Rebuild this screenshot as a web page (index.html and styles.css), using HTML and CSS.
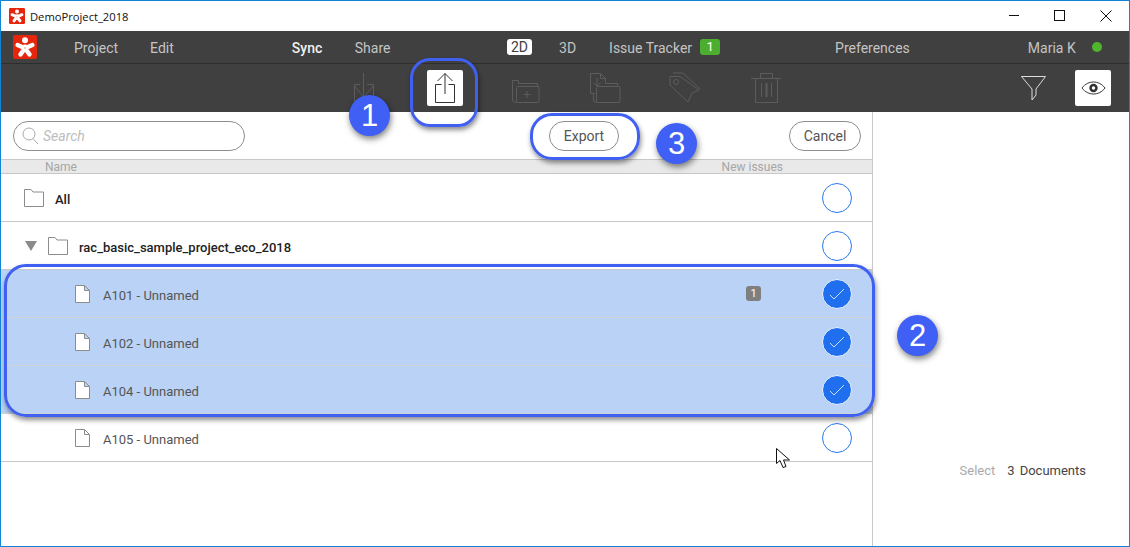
FILE: index.html
```html
<!DOCTYPE html>
<html lang="en">

<head>
  <meta charset="UTF-8">
  <title>DemoProject_2018</title>
  <link rel="stylesheet" href="styles.css">
</head>

<body>
<div class="window">

  <div class="titlebar">
    <svg class="title-logo" viewBox="0 0 24 24"><use href="#logo"/></svg>
    <span class="title-text">DemoProject_2018</span>
    <div class="win-btns">
      <svg width="12" height="12" viewBox="0 0 12 12"><path d="M1 5.500H11" stroke="#111" fill="none"/></svg>
      <svg width="12" height="12" viewBox="0 0 12 12"><rect x=".5" y=".5" width="10" height="10" stroke="#111" fill="none"/></svg>
      <svg width="12" height="12" viewBox="0 0 12 12"><path d="M.5 .5L11.500 11.500M11.500 .5L.5 11.500" stroke="#111" fill="none"/></svg>
    </div>
  </div>

  <div class="menubar">
    <svg class="menu-logo" viewBox="0 0 24 24">
      <g id="logo">
        <rect width="24" height="24" rx="2" fill="#e5260c"/>
        <circle cx="12" cy="5.200" r="3" fill="#fff"/>
        <path d="M4.600 10L12 13.200L19.400 10M12 13.200L7.500 19.400M12 13.200L16.500 19.400" stroke="#fff" stroke-width="4.400" stroke-linecap="round" stroke-linejoin="round" fill="none"/>
        <circle cx="12" cy="13" r="3.600" fill="#fff"/>
        <circle cx="12" cy="13" r="1" fill="#f6b7ab"/>
      </g>
    </svg>
    <a class="menu-item item-project">Project</a>
    <a class="menu-item item-edit">Edit</a>
    <a class="menu-item item-sync">Sync</a>
    <a class="menu-item item-share">Share</a>
    <a class="menu-item item-2d">2D</a>
    <a class="menu-item item-3d">3D</a>
    <a class="menu-item item-issue">Issue Tracker</a>
    <span class="issue-badge">1</span>
    <a class="menu-item item-pref">Preferences</a>
    <a class="menu-item item-user">Maria K</a>
    <span class="status-dot"></span>
  </div>

  <div class="toolbar">
    <svg class="tool tool-import" width="20" height="29" viewBox="0 0 20 29">
      <path d="M9.500 0V24M.5 11.500H6M13 11.500H19.500V29H.5V11.500M.5 13L9.500 24L19.500 13" stroke="#5c5c5c" fill="none"/>
    </svg>
    <div class="tool-box tool-export">
      <svg width="20" height="30" viewBox="0 0 20 30">
        <path d="M6.500 11.500H.5V29.500H19.500V11.500H13.500M10 .5V21M2.500 8L10 .5L17.500 8" stroke="#333" fill="none"/>
      </svg>
    </div>
    <svg class="tool tool-newfolder" width="28" height="23" viewBox="0 0 28 23">
      <path d="M.5 20V.5H6.500V3.500H25.500V6.500M.5 20Q.5 22.500 4.500 22.500" stroke="#5c5c5c" fill="none"/>
      <rect x="4.500" y="6.500" width="22.500" height="16" rx="1" stroke="#5c5c5c" fill="none"/>
      <path d="M15 11V18M11.500 14.500H18.500" stroke="#5c5c5c" fill="none"/>
    </svg>
    <svg class="tool tool-docfolder" width="31" height="30" viewBox="0 0 31 30">
      <path d="M5 20.500H.5V.5H10.500L15.500 5.500V10.500M10.500 .5V5.500H15.500M7 5V13M3.500 10L7 13L10.500 10M15.500 10.500H27.500V13M3.500 21V27Q3.500 29.500 6.500 29.500" stroke="#5c5c5c" fill="none"/>
      <rect x="6.500" y="13.500" width="23.500" height="16" rx="1" stroke="#5c5c5c" fill="none"/>
    </svg>
    <svg class="tool tool-tag" width="32" height="31" viewBox="0 0 32 31">
      <path d="M1 4.500H11L30 18L23 21L19 30L1 13ZM4 1H14L31 17" stroke="#5c5c5c" fill="none"/>
      <circle cx="7" cy="10" r="2.500" stroke="#5c5c5c" fill="none"/>
    </svg>
    <svg class="tool tool-trash" width="30" height="30" viewBox="0 0 30 30">
      <path d="M0 5.500H30M9.500 5V.5H21.500V5M4.500 5.500V29.500H26.500V5.500M10.500 10V24M20.500 10V24" stroke="#5c5c5c" fill="none"/>
      <path d="M15.500 10V24" stroke="#5c5c5c" stroke-width="2" fill="none"/>
    </svg>
    <svg class="tool tool-filter" width="25" height="25" viewBox="0 0 25 25">
      <path d="M.5 .5H24.500L15 13V19L11 24V13Z" stroke="#ddd" fill="none"/>
    </svg>
    <div class="tool-box tool-eye">
      <svg width="25" height="14" viewBox="0 0 25 14">
        <path d="M1 7C7 -1 18 -1 24 7C18 15 7 15 1 7Z" stroke="#333" fill="none"/>
        <circle cx="12.500" cy="7" r="4.200" fill="#333"/>
        <circle cx="12.500" cy="7" r="1.700" fill="#fff"/>
      </svg>
    </div>
  </div>

  <div class="content">
    <div class="left-panel">
      <div class="actions">
        <div class="search">
          <svg width="17" height="18" viewBox="0 0 17 18"><circle cx="7" cy="7" r="6" stroke="#aaa" fill="none"/><path d="M11 11.500L16 17" stroke="#aaa" fill="none"/></svg>
          <span>Search</span>
        </div>
        <button class="pill btn-export">Export</button>
        <button class="pill btn-cancel">Cancel</button>
      </div>

      <div class="list-head">
        <span>Name</span>
        <span>New issues</span>
      </div>

      <div class="row row-all">
        <svg width="20" height="18" viewBox="0 0 20 18"><path d="M.5 17.500V.5H7L9 3H19.500V17.500Z" stroke="#8c8c8c" fill="#fff"/></svg>
        <span class="row-name">All</span>
        <span class="radio"></span>
      </div>
      <div class="row row-project">
        <span class="caret"></span>
        <svg width="20" height="18" viewBox="0 0 20 18"><path d="M.5 17.500V.5H7L9 3H19.500V17.500Z" stroke="#8c8c8c" fill="#fff"/></svg>
        <span class="row-name">rac_basic_sample_project_eco_2018</span>
        <span class="radio"></span>
      </div>
      <div class="row row-doc selected">
        <svg width="15" height="18" viewBox="0 0 15 18"><path d="M.5 17.500V.5H9.500L14.500 5.500V17.500ZM9.500 .5V5.500H14.500" stroke="#8c8c8c" fill="#fff"/></svg>
        <span class="doc-name">A101 - Unnamed</span>
        <span class="count">1</span>
        <span class="radio checked"><svg width="16" height="12" viewBox="0 0 16 12"><path d="M1 7L5 11L15 1" stroke="#cfe0fb" fill="none"/></svg></span>
      </div>
      <div class="row row-doc selected">
        <svg width="15" height="18" viewBox="0 0 15 18"><path d="M.5 17.500V.5H9.500L14.500 5.500V17.500ZM9.500 .5V5.500H14.500" stroke="#8c8c8c" fill="#fff"/></svg>
        <span class="doc-name">A102 - Unnamed</span>
        <span class="radio checked"><svg width="16" height="12" viewBox="0 0 16 12"><path d="M1 7L5 11L15 1" stroke="#cfe0fb" fill="none"/></svg></span>
      </div>
      <div class="row row-doc selected">
        <svg width="15" height="18" viewBox="0 0 15 18"><path d="M.5 17.500V.5H9.500L14.500 5.500V17.500ZM9.500 .5V5.500H14.500" stroke="#8c8c8c" fill="#fff"/></svg>
        <span class="doc-name">A104 - Unnamed</span>
        <span class="radio checked"><svg width="16" height="12" viewBox="0 0 16 12"><path d="M1 7L5 11L15 1" stroke="#cfe0fb" fill="none"/></svg></span>
      </div>
      <div class="row row-doc">
        <svg width="15" height="18" viewBox="0 0 15 18"><path d="M.5 17.500V.5H9.500L14.500 5.500V17.500ZM9.500 .5V5.500H14.500" stroke="#8c8c8c" fill="#fff"/></svg>
        <span class="doc-name">A105 - Unnamed</span>
        <span class="radio"></span>
      </div>
    </div>

    <div class="right-panel">
      <span class="select-label">Select</span>
      <span class="select-num">3</span>
      <span>Documents</span>
    </div>
  </div>

  <!-- callouts drawn on top of the screenshot -->
  <div class="mark mark-export-tool"></div>
  <div class="mark mark-export-btn"></div>
  <div class="mark mark-rows"></div>
  <div class="bubble bubble-1">1</div>
  <div class="bubble bubble-2">2</div>
  <div class="bubble bubble-3">3</div>
  <svg class="cursor" width="15" height="21" viewBox="0 0 15 21">
    <path d="M.5 .5V15.500L4 12.500L7 19.500L10 18.500L7.500 12H13.500Z" stroke="#111" fill="#fff"/>
  </svg>
</div>
</body>

</html>
```

FILE: styles.css
```css
* {
  padding: 0;
  margin: 0;
  box-sizing: border-box;
}

body {
  font-family: Roboto, sans-serif;
  background: #fff;
}

.window {
  position: relative;
  width: 1130px;
  height: 547px;
  border: 1px solid #1284d8;
  overflow: hidden;
}

.titlebar {
  height: 30px;
  display: flex;
  align-items: center;
  padding-left: 8px;
  background: #fff;
}

.title-logo {
  width: 16px;
  height: 16px;
  margin-right: 5px;
}

.title-text {
  font-family: "Open Sans", sans-serif;
  font-size: 11.2px;
  color: #111;
}

.win-btns {
  margin-left: auto;
  display: flex;
  gap: 34px;
  padding-right: 17px;
}

.menubar {
  height: 33px;
  background: #404040;
  border-bottom: 1px solid #2e2e2e;
  display: flex;
  align-items: center;
  padding-left: 12px;
}

.menu-logo {
  width: 24px;
  height: 24px;
}

.menu-item {
  font-size: 14px;
  color: #c4c4c4;
  padding-top: 2px;
}

.item-project { margin-left: 37px; }
.item-edit { margin-left: 32px; }
.item-sync { margin-left: 118px; font-weight: 500; color: #f0f0f0; }
.item-share { margin-left: 32.5px; }

.item-2d {
  margin-left: 116.5px;
  padding: 0 4px;
  background: #fff;
  color: #404040;
  border-radius: 3px;
  line-height: 16px;
}

.item-3d { margin-left: 27px; }
.item-issue { margin-left: 33px; }

.issue-badge {
  margin-left: 8px;
  width: 20px;
  height: 16px;
  line-height: 16px;
  background: #4cae2e;
  color: #fff;
  border-radius: 3px;
  text-align: center;
  font-size: 13px;
}

.item-pref { margin-left: 115px; }
.item-user { margin-left: 118px; }

.status-dot {
  margin-left: 16px;
  width: 10px;
  height: 10px;
  border-radius: 50%;
  background: #4fb52e;
}

.toolbar {
  height: 48px;
  background: #404040;
  display: flex;
  align-items: flex-start;
}

.tool { flex: none; }
.tool-import { margin: 9px 0 0 353px; }

.tool-box {
  width: 36px;
  height: 36px;
  background: #fff;
  border-radius: 2px;
  display: flex;
  align-items: center;
  justify-content: center;
  flex: none;
}

.tool-export { margin: 6px 0 0 53px; }
.tool-newfolder { margin: 16px 0 0 49px; }
.tool-docfolder { margin: 9px 0 0 50px; }
.tool-tag { margin: 8px 0 0 48px; }
.tool-trash { margin: 9px 0 0 50px; }
.tool-filter { margin: 12px 0 0 240px; }
.tool-eye { margin: 6px 0 0 29px; }

.content {
  height: 434px;
  display: flex;
}

.left-panel {
  width: 872px;
  border-right: 1px solid #c8c8c8;
}

.actions {
  height: 47px;
  display: flex;
  align-items: center;
  padding: 0 11px 0 12px;
}

.search {
  width: 232px;
  height: 30px;
  border: 1px solid #8c8c8c;
  border-radius: 15px;
  display: flex;
  align-items: center;
  gap: 4px;
  padding-left: 8px;
  font-size: 14px;
  font-style: italic;
  color: #bcbcbc;
}

.pill {
  height: 30px;
  border: 1px solid #8c8c8c;
  border-radius: 15px;
  background: #fff;
  font-family: Roboto, sans-serif;
  font-size: 14px;
  color: #555;
}

.btn-export {
  width: 70px;
  margin-left: 304px;
}

.btn-cancel {
  width: 72px;
  margin-left: auto;
}

.list-head {
  height: 15px;
  background: #e9e9e9;
  border-top: 1px solid #c8c8c8;
  border-bottom: 1px solid #c8c8c8;
  display: flex;
  justify-content: space-between;
  padding: 0 89px 0 44px;
  font-size: 12px;
  line-height: 15px;
  color: #a6a6a6;
}

.row {
  height: 48px;
  display: flex;
  align-items: center;
  border-bottom: 1px solid #c8c8c8;
  padding-right: 20px;
}

.row-all { padding-left: 23px; }
.row-project { padding-left: 24px; }
.row-doc { padding-left: 74px; }

.selected {
  background: #b9d2f6;
  border-bottom-color: #cfd3d8;
}

.caret {
  width: 0;
  height: 0;
  border-left: 6px solid transparent;
  border-right: 6px solid transparent;
  border-top: 10px solid #8a8a8a;
  margin-right: 11px;
}

.row-name {
  font-size: 13px;
  font-weight: 500;
  color: #222;
  margin-left: 11px;
  padding-top: 4px;
}

.doc-name {
  font-size: 13px;
  color: #555;
  margin-left: 13px;
  padding-top: 4px;
}

.count {
  margin-left: auto;
  margin-right: 61px;
  width: 15px;
  height: 15px;
  line-height: 15px;
  border-radius: 3px;
  background: #7f7f7f;
  color: #fff;
  font-size: 11px;
  text-align: center;
}

.radio {
  margin-left: auto;
  width: 30px;
  height: 30px;
  border-radius: 50%;
  border: 1px solid #2a78ee;
  background: #fff;
  display: flex;
  align-items: center;
  justify-content: center;
}

.count + .radio { margin-left: 0; }

.radio.checked {
  background: #1f6fef;
  border-color: #eef4fd;
}

.right-panel {
  flex: 1;
  display: flex;
  justify-content: flex-end;
  padding: 351px 43px 0 0;
  font-size: 13px;
  line-height: 16px;
  color: #444;
}

.select-label { color: #aaa; }
.select-num { margin: 0 5px 0 12px; }

/* callouts */
.mark {
  position: absolute;
  border: 3px solid #4060f2;
  box-shadow: 1px 3px 5px rgba(0, 0, 0, 0.45);
}

.mark-export-tool {
  left: 409px;
  top: 57px;
  width: 68px;
  height: 69px;
  border-radius: 20px;
}

.mark-export-btn {
  left: 529px;
  top: 112px;
  width: 110px;
  height: 47px;
  border-radius: 22px;
}

.mark-rows {
  left: 3px;
  top: 263px;
  width: 871px;
  height: 153px;
  border-radius: 22px;
}

.bubble {
  position: absolute;
  width: 41px;
  height: 41px;
  border-radius: 50%;
  background: #3f5ff5;
  color: #fff;
  font-family: "Liberation Sans", sans-serif;
  font-size: 31px;
  line-height: 41px;
  text-align: center;
  box-shadow: 1px 3px 6px rgba(0, 0, 0, 0.5);
}

.bubble-1 { left: 348px; top: 94px; }
.bubble-2 { left: 896px; top: 314px; }
.bubble-3 { left: 655px; top: 122px; }

.cursor {
  position: absolute;
  left: 775px;
  top: 447px;
}
```
